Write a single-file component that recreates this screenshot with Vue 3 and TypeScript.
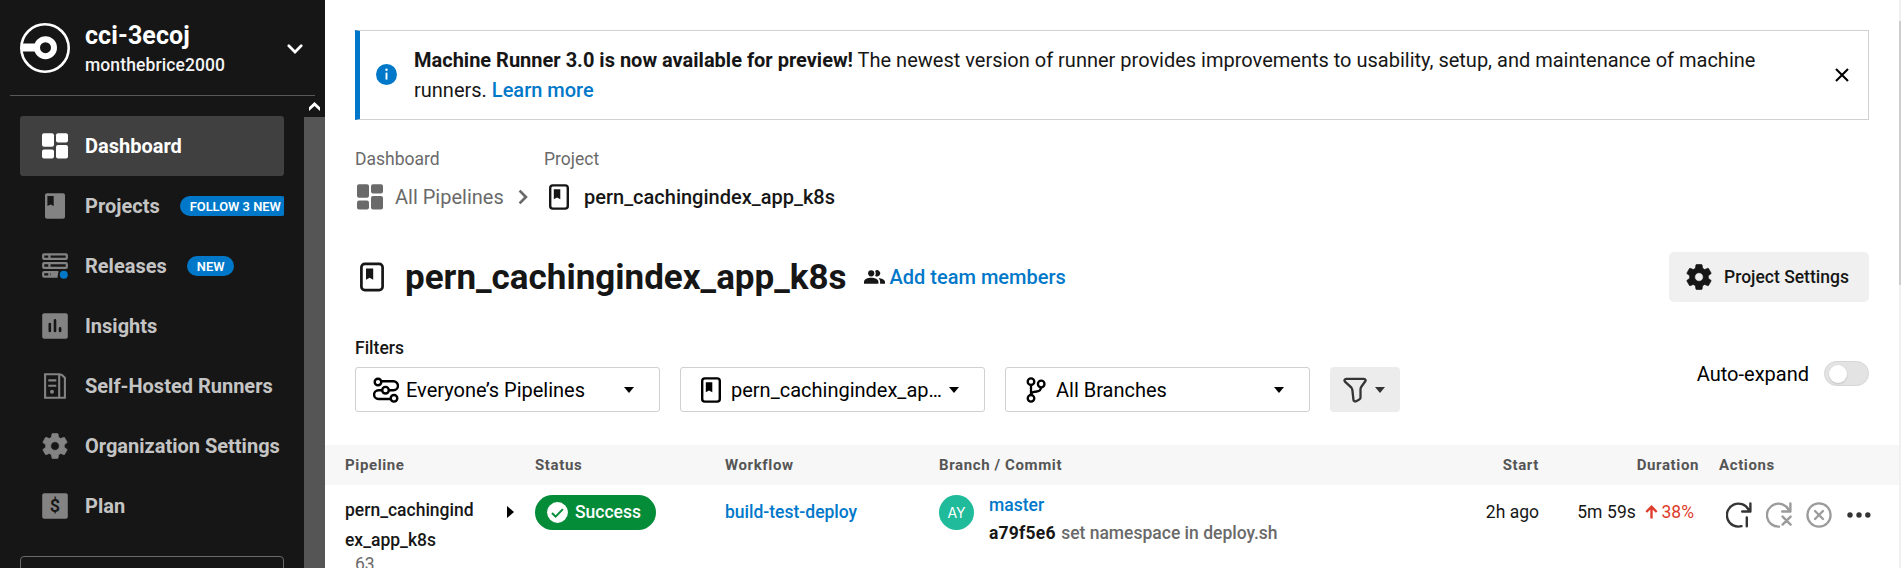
<script setup lang="ts">
interface NavItem {
  label: string
  icon: string
  badge?: string
  active?: boolean
}

const nav: NavItem[] = [
  { label: 'Dashboard', icon: 'dashboard', active: true },
  { label: 'Projects', icon: 'projects', badge: 'FOLLOW 3 NEW' },
  { label: 'Releases', icon: 'releases', badge: 'NEW' },
  { label: 'Insights', icon: 'insights' },
  { label: 'Self-Hosted Runners', icon: 'runners' },
  { label: 'Organization Settings', icon: 'gear' },
  { label: 'Plan', icon: 'plan' },
]

const gear =
  'M19.14 12.94c.04-.3.06-.61.06-.94 0-.32-.02-.64-.07-.94l2.03-1.58c.18-.14.23-.41.12-.61l-1.92-3.32c-.12-.22-.37-.29-.59-.22l-2.39.96c-.5-.38-1.03-.7-1.62-.94l-.36-2.54c-.04-.24-.24-.41-.48-.41h-3.84c-.24 0-.43.17-.47.41l-.36 2.54c-.59.24-1.13.57-1.62.94l-2.39-.96c-.22-.08-.47 0-.59.22L2.74 8.87c-.12.21-.08.47.12.61l2.03 1.58c-.05.3-.09.63-.09.94s.02.64.07.94l-2.03 1.58c-.18.14-.23.41-.12.61l1.92 3.32c.12.22.37.29.59.22l2.39-.96c.5.38 1.03.7 1.62.94l.36 2.54c.05.24.24.41.48.41h3.84c.24 0 .44-.17.47-.41l.36-2.54c.59-.24 1.13-.56 1.62-.94l2.39.96c.22.08.47 0 .59-.22l1.92-3.32c.12-.22.07-.47-.12-.61l-2.01-1.58zM12 15.3a3.3 3.3 0 1 1 0-6.6 3.3 3.3 0 0 1 0 6.6z'

const columns: string[] = ['Pipeline', 'Status', 'Workflow', 'Branch / Commit', 'Start', 'Duration', 'Actions']
</script>

<template>
  <div class="app">
    <aside class="sidebar">
      <header class="org">
        <svg class="logo" viewBox="0 0 50 50" width="50" height="50">
          <circle cx="25" cy="25" r="23.7" fill="none" stroke="#fff" stroke-width="2.6" />
          <rect x="2" y="20.5" width="15" height="8" fill="#fff" />
          <circle cx="25.5" cy="24.7" r="8.5" fill="#161616" stroke="#fff" stroke-width="6" />
        </svg>
        <div class="org-names">
          <div class="org-name">cci-3ecoj</div>
          <div class="org-user">monthebrice2000</div>
        </div>
        <svg class="org-chevron" viewBox="0 0 16 10" width="16" height="10">
          <path d="M1.8 1.8 8 8l6.2-6.2" fill="none" stroke="#fff" stroke-width="2.7" stroke-linecap="round" />
        </svg>
      </header>
      <div class="side-body">
        <nav class="nav">
          <div v-for="item in nav" :key="item.label" class="nav-item" :class="{ active: item.active }">
            <svg class="nav-icon" viewBox="0 0 26 26" width="26" height="26">
              <g v-if="item.icon === 'dashboard'" fill="currentColor">
                <rect x="0" y="0.2" width="12" height="13.6" rx="2" />
                <rect x="0" y="16.4" width="12" height="9.2" rx="2" />
                <rect x="14" y="0.2" width="12" height="9.2" rx="2" />
                <rect x="14" y="12" width="12" height="13.6" rx="2" />
              </g>
              <g v-else-if="item.icon === 'projects'">
                <rect x="3" y="0.2" width="20" height="25.5" rx="2" fill="currentColor" />
                <path d="M5.4 3h6.3v10l-3.1-1.5L5.4 13z" fill="#161616" />
              </g>
              <g v-else-if="item.icon === 'releases'" fill="none" stroke="currentColor" stroke-width="2.2">
                <rect x="1.2" y="1.3" width="23.6" height="4.6" rx="0.8" />
                <rect x="1.2" y="10.2" width="23.6" height="4.6" rx="0.8" />
                <path d="M16.4 19.1H2.200a1 1 0 0 0-1 1v2.600a1 1 0 0 0 1 1h13.400M7.400 1v5M7.400 10v5M7.400 19v5M9 21.400h7" />
                <circle cx="21.8" cy="21.8" r="4" fill="#0078ca" stroke="none" />
              </g>
              <g v-else-if="item.icon === 'insights'">
                <rect x="0.2" y="0.2" width="25.6" height="25.6" rx="2" fill="currentColor" />
                <path d="M7.8 11v7M13 7.2v10.8M18.1 15.2V18" stroke="#161616" stroke-width="2.6" stroke-linecap="round" />
              </g>
              <g v-else-if="item.icon === 'runners'" fill="none" stroke="currentColor" stroke-width="2.1">
                <path d="M17.2 24.7H3.1V1.3h14.1zM17.2 1.4l2.4.3 3.3 3.1v19.9h-5.7" />
                <path d="M6.3 7.4h8M6.3 12.7h8" />
                <circle cx="10" cy="18.8" r="2" fill="currentColor" stroke="none" />
              </g>
              <svg v-else-if="item.icon === 'gear'" viewBox="2.2 2 19.6 20" width="26" height="26">
                <path :d="gear" fill="currentColor" stroke="currentColor" stroke-width=".5" fill-rule="evenodd" />
              </svg>
              <g v-else>
                <rect x="0.2" y="0.2" width="25.6" height="25.6" rx="2" fill="currentColor" />
                <text class="dollar" x="13" y="19.1" text-anchor="middle">$</text>
              </g>
            </svg>
            <span class="nav-label">{{ item.label }}</span>
            <span v-if="item.badge" class="badge">{{ item.badge }}</span>
          </div>
          <div class="side-card"></div>
        </nav>
        <div class="side-scroll">
          <div class="side-up">
            <svg viewBox="0 0 11 9" width="11" height="9"><path d="M0 5.3 5.5 0 11 5.3V9L5.5 3.9 0 9z" fill="#fff" /></svg>
          </div>
          <div class="side-thumb"></div>
        </div>
      </div>
    </aside>

    <main class="main">
      <section class="banner">
        <svg class="info" viewBox="0 0 21 21" width="21" height="21">
          <circle cx="10.5" cy="10.5" r="10.5" fill="#0078ca" />
          <path d="M10.5 8.6v7" stroke="#fff" stroke-width="1.9" />
          <circle cx="10.5" cy="5.7" r="1.2" fill="#fff" />
        </svg>
        <p class="banner-text">
          <b>Machine Runner 3.0 is now available for preview!</b> The newest version of runner provides improvements to
          usability, setup, and maintenance of machine runners. <a>Learn more</a>
        </p>
        <svg class="close" viewBox="0 0 14 14" width="14" height="14">
          <path d="m1 1 12 12M13 1 1 13" stroke="#000" stroke-width="2.1" />
        </svg>
      </section>

      <section class="crumbs">
        <div class="crumb first">
          <div class="crumb-label">Dashboard</div>
          <div class="crumb-link">
            <svg viewBox="0 0 26 26" width="26" height="26">
              <g fill="currentColor">
                <rect x="0" y="0.2" width="12" height="13.6" rx="2" />
                <rect x="0" y="16.4" width="12" height="9.2" rx="2" />
                <rect x="14" y="0.2" width="12" height="9.2" rx="2" />
                <rect x="14" y="12" width="12" height="13.6" rx="2" />
              </g>
            </svg>
            <span class="crumb-text">All Pipelines</span>
            <svg class="crumb-sep" viewBox="0 0 10 16" width="10" height="16">
              <path d="m1.6 1.6 6.3 6.4-6.3 6.4" fill="none" stroke="currentColor" stroke-width="2.7" />
            </svg>
          </div>
        </div>
        <div class="crumb">
          <div class="crumb-label">Project</div>
          <div class="crumb-link current">
            <svg viewBox="0 0 20 26" width="20" height="26">
              <rect x="1.2" y="1.4" width="17.6" height="23.2" rx="2.6" fill="none" stroke="currentColor" stroke-width="2.4" />
              <path d="M4.8 5.3h6.5v10L8 13.6l-3.2 1.7z" fill="currentColor" />
            </svg>
            <span class="crumb-text">pern_cachingindex_app_k8s</span>
          </div>
        </div>
      </section>

      <section class="title-row">
        <svg class="title-icon" viewBox="0 0 24 30" width="24" height="30">
          <rect x="1.4" y="1.9" width="21.2" height="26.2" rx="3.4" fill="none" stroke="#161616" stroke-width="2.7" />
          <path d="M6 6.6h7.2v11.2l-3.6-2-3.6 2z" fill="#161616" />
        </svg>
        <h1 class="title">pern_cachingindex_app_k8s</h1>
        <svg class="team" viewBox="0 0 21 14" width="21" height="14">
          <g fill="#161616">
            <circle cx="7.2" cy="3.3" r="3.1" />
            <path d="M0 13.8v-2c0-2.6 4-4 7.2-4s7.2 1.4 7.2 4v2z" />
            <path d="M11.1.9a3.1 3.1 0 1 1 0 4.8 5 5 0 0 0 0-4.8z" />
            <path d="M14.4 8c3.2.3 6.6 1.7 6.6 3.9v1.9h-4.9v-2c0-1.6-.6-2.9-1.7-3.8z" />
          </g>
        </svg>
        <a class="add-team">Add team members</a>
        <button class="settings">
          <svg viewBox="2.2 2 19.6 20" width="26" height="26">
            <path :d="gear" fill="#161616" stroke="#161616" stroke-width=".5" fill-rule="evenodd" />
          </svg>
          <span>Project Settings</span>
        </button>
      </section>

      <section class="filters">
        <div class="filter-area">
          <div class="filter-title">Filters</div>
          <div class="filter-row">
            <div class="select everyone">
              <svg viewBox="0 0 26 26" width="26" height="26">
                <g fill="none" stroke="#000" stroke-width="2.4">
                  <circle cx="5" cy="5" r="3.3" />
                  <circle cx="12.5" cy="13.2" r="3.3" />
                  <circle cx="21" cy="21.3" r="3.3" />
                  <path d="M8.3 4.3h12.2a4.3 4.3 0 0 1 0 8.9h-4.7M9.2 13.2H5.5a4.3 4.3 0 0 0 0 8.8h12.2" />
                </g>
              </svg>
              <span class="select-text">Everyone’s Pipelines</span>
              <i class="caret"></i>
            </div>
            <div class="select project">
              <svg viewBox="0 0 20 26" width="20" height="26">
                <rect x="1.2" y="1.4" width="17.6" height="23.2" rx="2.6" fill="none" stroke="#000" stroke-width="2.4" />
                <path d="M4.8 5.3h6.5v10L8 13.6l-3.2 1.7z" fill="#000" />
              </svg>
              <span class="select-text">pern_cachingindex_ap…</span>
              <i class="caret"></i>
            </div>
            <div class="select branches">
              <svg viewBox="0 0 20 26" width="20" height="26">
                <g fill="none" stroke="#000" stroke-width="2.3">
                  <circle cx="5" cy="4.7" r="3.3" />
                  <circle cx="15.2" cy="7" r="3.3" />
                  <circle cx="5" cy="21.3" r="3.3" />
                  <path d="M5 8v10M15 10.3c0 2.7-1.6 4-4.2 4.2C7.5 14.7 5 15 5 17.5" />
                </g>
              </svg>
              <span class="select-text">All Branches</span>
              <i class="caret"></i>
            </div>
            <div class="funnel">
              <svg viewBox="0 0 24 26" width="24" height="26">
                <path d="M3.2 1.8h17.600c1.700 0 2.200 1.600 1.300 2.700l-3.600 5c-.8 1.100-1 1.800-1 3v8.100c0 1-.4 1.500-1.200 1.900l-2.700 1.400c-1.800.9-3.200.3-3.200-1.500l-1-8.900c-.1-1.300-.4-2-1-2.900L2 4.600C1 3.300 1.700 1.800 3.200 1.800z" fill="none" stroke="#343434" stroke-width="2.3" />
              </svg>
              <i class="caret"></i>
            </div>
          </div>
        </div>
        <div class="auto">
          <span>Auto-expand</span>
          <div class="toggle"><div class="knob"></div></div>
        </div>
      </section>

      <section class="table">
        <div class="grid head">
          <div v-for="c in columns" :key="c" class="cell">{{ c }}</div>
        </div>
        <div class="grid row">
          <div class="cell pipeline">
            <div>
              <div class="pipe-name">pern_cachingind<br />ex_app_k8s</div>
              <div class="pipe-num">63</div>
            </div>
            <i class="play"></i>
          </div>
          <div class="cell">
            <div class="success">
              <svg viewBox="0 0 21 21" width="21" height="21">
                <circle cx="10.5" cy="10.5" r="10.4" fill="#fff" />
                <path d="m5 11 3.6 3.6 7.3-7.5" fill="none" stroke="#048c38" stroke-width="2" />
              </svg>
              <span>Success</span>
            </div>
          </div>
          <div class="cell workflow"><a>build-test-deploy</a></div>
          <div class="cell commit">
            <div class="avatar">AY</div>
            <div>
              <div class="branch"><a>master</a></div>
              <div class="message"><b>a79f5e6</b> set namespace in deploy.sh</div>
            </div>
          </div>
          <div class="cell when">2h ago</div>
          <div class="cell duration">
            <span class="elapsed">5m 59s</span>
            <svg viewBox="0 0 13 14" width="13" height="14">
              <path d="M6.5 13.5V2M1.3 7l5.2-5.3L11.7 7" fill="none" stroke="#de3c2c" stroke-width="2.4" />
            </svg>
            <span class="delta">38%</span>
          </div>
          <div class="cell actions">
            <svg viewBox="0 0 26 26" width="26" height="26">
              <g fill="none" stroke="#343434" stroke-width="2.4" stroke-linecap="round" stroke-linejoin="round">
                <path d="M15.5 24.2A11.5 11.5 0 1 1 22.5 7.6M24.4 1.4v8.1h-8.2M20.8 15.5v8.8" />
              </g>
            </svg>
            <svg viewBox="0 0 26 26" width="26" height="26">
              <g fill="none" stroke="#9b9b9b" stroke-width="2.4" stroke-linecap="round" stroke-linejoin="round">
                <path d="M13 24.6A11.5 11.5 0 1 1 22.5 7.6M24.4 1.4v8.1h-8.2M16.6 14.6l8 8M24.6 14.6l-8 8" />
              </g>
            </svg>
            <svg viewBox="0 0 26 26" width="26" height="26">
              <g fill="none" stroke="#9b9b9b" stroke-width="2.3" stroke-linecap="round">
                <circle cx="13" cy="13" r="11.6" />
                <path d="m9 9 8 8M17 9l-8 8" />
              </g>
            </svg>
            <svg class="dots" viewBox="0 0 24 6" width="24" height="6">
              <g fill="#343434"><circle cx="3" cy="3" r="2.7" /><circle cx="12" cy="3" r="2.7" /><circle cx="20.8" cy="3" r="2.7" /></g>
            </svg>
          </div>
        </div>
      </section>
    </main>
    <div class="page-scroll"><div class="page-thumb"></div></div>
  </div>
</template>

<style>
body {
  margin: 0;
  overflow: hidden;
}
</style>

<style scoped>
.app {
  display: flex;
  width: 1901px;
  height: 568px;
  overflow: hidden;
  background: #fff;
  color: #161616;
  font-family: Roboto, 'Liberation Sans', sans-serif;
  font-size: 17.5px;
}
.app * {
  box-sizing: border-box;
}
svg {
  display: block;
  flex: none;
}
a {
  color: #0078ca;
  font-weight: 500;
}

.sidebar {
  display: flex;
  flex-direction: column;
  flex: none;
  width: 325px;
  background: #161616;
}
.org {
  display: flex;
  height: 96px;
  margin: 0 10px;
  padding: 0 12px 0 10px;
  border-bottom: 1px solid #585858;
}
.logo {
  margin-top: 23px;
}
.org-names {
  flex: 1;
  padding: 20px 0 0 15px;
  color: #fff;
}
.org-name {
  font-size: 25px;
  font-weight: 700;
  letter-spacing: 0.1px;
  line-height: 31px;
}
.org-user {
  font-weight: 500;
  letter-spacing: 0.1px;
  line-height: 29px;
  color: #f3f3f3;
}
.org-chevron {
  margin-top: 44px;
}
.side-body {
  display: flex;
  flex: 1;
  min-height: 0;
}
.nav {
  flex: 1;
  padding: 20px 20px 0;
}
.nav-item {
  display: flex;
  align-items: center;
  height: 60px;
  padding-left: 22px;
  border-radius: 3px;
  overflow: hidden;
  color: #838383;
}
.nav-item.active {
  background: #404040;
  color: #fff;
}
.nav-icon {
  margin-right: 17px;
}
.nav-label {
  color: #c4c4c4;
  font-size: 20px;
  font-weight: 700;
  white-space: nowrap;
}
.active .nav-label {
  color: #fff;
}
.dollar {
  fill: #161616;
  font-size: 18px;
  font-weight: 600;
}
.badge {
  flex: none;
  height: 20px;
  margin-left: 20px;
  padding: 0 10px;
  border-radius: 10px;
  background: #0078ca;
  color: #fff;
  font-size: 12.9px;
  font-weight: 600;
  line-height: 21px;
}
.side-card {
  height: 60px;
  margin-top: 20px;
  border: 1px solid #6a6a6a;
  border-radius: 4px;
}
.side-scroll {
  flex: none;
  width: 21px;
}
.side-up {
  display: flex;
  align-items: center;
  justify-content: center;
  height: 21px;
}
.side-thumb {
  height: 451px;
  background: #555;
}

.main {
  flex: none;
  width: 1574px;
}
.banner {
  display: flex;
  width: 1514px;
  height: 90px;
  margin: 30px 0 0 30px;
  border: 1px solid #d0d0d0;
  border-left: 5px solid #0078ca;
}
.info {
  margin: 33px 0 0 16px;
}
.banner-text {
  flex: 1;
  margin: 14px 60px 0 17px;
  font-size: 20px;
  line-height: 30px;
}
.close {
  margin: 37px 19.5px 0 0;
}
.crumbs {
  display: flex;
  height: 98px;
  padding: 24px 0 0 30px;
}
.crumb.first {
  width: 189px;
}
.crumb-label {
  color: #6a6a6a;
  line-height: 30px;
}
.crumb-link {
  display: flex;
  align-items: center;
  height: 46px;
  padding-left: 2px;
  color: #6a6a6a;
  font-size: 20px;
}
.crumb-text {
  margin-left: 12px;
}
.crumb-sep {
  margin-left: 14px;
}
.crumb-link.current {
  padding-left: 5px;
  color: #161616;
  font-weight: 500;
}
.current .crumb-text {
  margin-left: 15px;
}
.title-row {
  display: flex;
  align-items: center;
  width: 1544px;
  height: 50px;
  margin-top: 34px;
  padding-left: 35px;
}
.title {
  margin: 0 0 0 21px;
  font-size: 35px;
  font-weight: 700;
}
.team {
  margin-left: 17px;
}
.add-team {
  margin-left: 5px;
  font-size: 20px;
}
.settings {
  display: flex;
  align-items: center;
  width: 200px;
  height: 50px;
  margin-left: auto;
  padding: 0 0 0 17px;
  border: 0;
  border-radius: 5px;
  background: #f0f0f0;
  color: #161616;
  font-family: inherit;
  font-size: 17.5px;
  font-weight: 500;
}
.settings span {
  margin-left: 12px;
}
.filters {
  display: flex;
  justify-content: space-between;
  width: 1544px;
  height: 143px;
  padding: 31px 0 0 30px;
}
.filter-title {
  height: 34px;
  font-weight: 500;
  line-height: 30px;
}
.filter-row {
  display: flex;
  gap: 20px;
}
.select {
  display: flex;
  align-items: center;
  width: 305px;
  height: 45px;
  border: 1px solid #d0d0d0;
  border-radius: 3px;
  color: #000;
  font-size: 20px;
}
.select .caret {
  margin-left: auto;
  margin-right: 25px;
}
.select-text {
  margin-left: 7px;
  white-space: nowrap;
}
.caret {
  border: 5.5px solid transparent;
  border-top: 6px solid #000;
  border-bottom: 0;
}
.everyone {
  padding-left: 17px;
}
.project {
  padding-left: 20px;
}
.project .select-text,
.branches .select-text {
  margin-left: 10px;
}
.branches {
  padding-left: 20px;
}
.funnel {
  display: flex;
  align-items: center;
  gap: 8px;
  width: 70px;
  height: 45px;
  padding-left: 13px;
  border-radius: 4px;
  background: #ececec;
}
.funnel .caret {
  border-top-color: #343434;
}
.auto {
  display: flex;
  align-items: center;
  gap: 15px;
  height: 25px;
  margin-top: 28px;
  font-size: 20px;
  color: #000;
}
.toggle {
  width: 45px;
  height: 25px;
  padding: 2px 3.5px;
  border: 1px solid #d6d6d6;
  border-radius: 13px;
  background: #e3e3e3;
}
.knob {
  width: 18px;
  height: 18px;
  margin-top: 1px;
  border-radius: 50%;
  background: #fff;
  box-shadow: 0 1px 2px rgba(0, 0, 0, 0.15);
}

.grid {
  display: grid;
  grid-template-columns: 190px 190px 214px 429px 171px 160px 200px;
  padding-left: 20px;
}
.head {
  height: 40px;
  background: #f7f7f7;
  color: #555;
  font-size: 15px;
  font-weight: 700;
  letter-spacing: 0.62px;
  line-height: 40px;
}
.head .cell:nth-child(5),
.head .cell:nth-child(6) {
  text-align: right;
}
.head .cell:nth-child(7) {
  padding-left: 20px;
}
.row {
  height: 120px;
  padding-top: 10px;
  line-height: 35px;
}
.pipeline {
  display: flex;
  justify-content: space-between;
}
.pipe-name {
  font-weight: 500;
  line-height: 30px;
}
.pipe-num {
  padding-left: 10px;
  color: #6a6a6a;
  line-height: 19px;
}
.play {
  width: 7px;
  height: 12px;
  margin: 11px 21px 0 0;
  border: 6px solid transparent;
  border-left: 7px solid #000;
  border-right: 0;
}
.success {
  display: flex;
  align-items: center;
  width: 121px;
  height: 35px;
  padding-left: 12px;
  border-radius: 18px;
  background: #048c38;
  color: #fff;
  font-weight: 500;
}
.success span {
  margin-left: 7px;
}
.commit {
  display: flex;
  gap: 15px;
}
.avatar {
  width: 35px;
  height: 35px;
  border-radius: 50%;
  background: #1fbb9b;
  color: #fff;
  font-family: Inter, sans-serif;
  font-size: 14px;
  line-height: 36px;
  text-align: center;
}
.branch {
  line-height: 20px;
}
.message {
  color: #6a6a6a;
  font-weight: 500;
  line-height: 36px;
}
.message b {
  margin-right: 1px;
  color: #161616;
  letter-spacing: 0.22px;
}
.when {
  text-align: right;
}
.duration {
  display: flex;
  justify-content: flex-end;
  padding-right: 5px;
}
.elapsed {
  letter-spacing: 0.1px;
}
.duration svg {
  margin: 10px 3.5px 0 9px;
}
.delta {
  color: #de3c2c;
}
.actions {
  display: flex;
  align-items: center;
  gap: 14px;
  height: 40px;
  padding-left: 27px;
}
.dots {
  margin-left: 1px;
}

.page-scroll {
  flex: none;
  width: 2px;
  padding-top: 21px;
  background: #f0f0f0;
}
.page-thumb {
  height: 264px;
  background: #cdcdcd;
}
</style>
